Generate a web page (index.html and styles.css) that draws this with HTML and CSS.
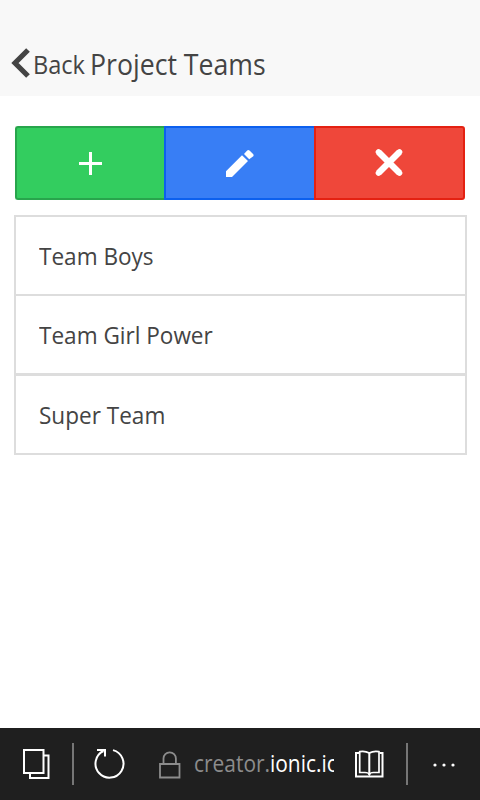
FILE: index.html
```html
<!DOCTYPE html>
<html lang="en">
<head>
<meta charset="utf-8">
<title>Project Teams</title>
<link rel="stylesheet" href="styles.css">
</head>
<body>
<header class="header">
  <svg class="chevron" width="22" height="32" viewBox="0 0 22 32"><path d="M18 3 5 16 18 29" fill="none" stroke="#444" stroke-width="5.200"/></svg>
  <span class="back">Back</span>
  <h1 class="title">Project Teams</h1>
</header>
<main class="content">
  <div class="buttons">
    <button class="button add" aria-label="Add"><svg width="32" height="32" viewBox="0 0 32 32"><path d="M5 16.500H28M16.500 5V28" stroke="#fff" stroke-width="3"/></svg></button>
    <button class="button edit" aria-label="Edit"><svg width="32" height="32" viewBox="0 0 32 32"><path d="M3 24.200V30H9L25 14 19 8.200ZM21 7 26.200 12.200 30.300 9.200Q31 8.200 30.300 7.300L26.500 3.500Q25.300 2.500 24.200 3.500Z" fill="#fff"/></svg></button>
    <button class="button remove" aria-label="Remove"><svg width="32" height="32" viewBox="0 0 32 32"><path d="M4.500 5 25.500 26M25.500 5 4.500 26" stroke="#fff" stroke-width="6.200"/><path d="M4.500 5 25.500 26M25.500 5 4.500 26" stroke="#fff" stroke-width="5.600" stroke-linecap="round"/></svg></button>
  </div>
  <ul class="list">
    <li class="item"><span>Team Boys</span></li>
    <li class="item thick"><span>Team Girl Power</span></li>
    <li class="item"><span>Super Team</span></li>
  </ul>
</main>
<footer class="bar">
  <svg class="tabs" width="30" height="32" viewBox="0 0 30 32" fill="none" stroke="#fff" stroke-width="2"><path d="M4 2H23.500V25H4ZM23 7.500H28.500V30H10V25"/></svg>
  <i class="divider"></i>
  <svg class="reload" width="32" height="32" viewBox="0 0 32 32" fill="none" stroke="#fff" stroke-width="2"><path d="M20 3.100A14 14 0 1 1 10.500 4M4 3H12V9.500"/></svg>
  <svg class="lock" width="22" height="28" viewBox="0 0 22 28" fill="none" stroke="#8c8c8c" stroke-width="1.800"><path d="M1 13H20.500V26.500H1ZM4.500 13V7.500a6.200 6.200 0 0 1 12.400 0V13"/></svg>
  <div class="url"><div class="address"><span>creator.</span>ionic.io</div></div>
  <svg class="book" width="29" height="28" viewBox="0 0 29 28" fill="none" stroke="#fff"><path stroke-width="2" d="M4 3H1V26.500H27.500V3H24.500M14.300 3V25"/><path stroke-width="1.700" d="M14.300 3Q10 .600 4.700 1.600V22.500H10Q13.500 22.500 14.300 24.500Q15 22.500 18.500 22.500H24V1.600Q18.500 .600 14.300 3"/></svg>
  <i class="divider second"></i>
  <svg class="more" width="24" height="4" viewBox="0 0 24 4" fill="#fff"><circle cx="2" cy="2" r="1.600"/><circle cx="11" cy="2" r="1.600"/><circle cx="20" cy="2" r="1.600"/></svg>
</footer>
</body>
</html>
```
FILE: styles.css
```css
* { box-sizing: border-box; }
body {
  margin: 0;
  height: 800px;
  display: flex;
  flex-direction: column;
  overflow: hidden;
  background: #fff;
  color: #444;
  font-family: "Open Sans", "Noto Sans", sans-serif;
}
svg { display: block; flex: none; }
.header {
  height: 96px;
  padding: 32px 0 0 10px;
  display: flex;
  align-items: center;
  background: #f8f8f8;
  white-space: nowrap;
}
.chevron { margin-top: -2px; }
.back { width: 58px; padding-left: 1px; font-size: 25.5px; transform: scaleX(0.925); transform-origin: left; }
.title { margin: 0; font-size: 28.5px; font-weight: 400; transform: scaleX(0.935); transform-origin: left; }
.content { flex: 1; padding: 30px 13px 0 14px; }
.buttons { display: grid; grid-template-columns: 149px 150px 151px; height: 74px; margin-left: 1px; }
.button {
  display: flex;
  align-items: center;
  justify-content: center;
  padding: 0 2px 0 0;
  border: 2px solid;
}
.add { background: #33cd5f; border-color: #28a54c; border-right: 0; border-radius: 3px 0 0 3px; }
.edit { background: #387ef5; border-color: #0c60ee; border-right: 0; }
.remove { background: #ef473a; border-color: #e42112; border-radius: 0 3px 3px 0; padding: 0; }
.list { margin: 15px 0 0; padding: 0; list-style: none; border: 2px solid #ddd; border-bottom: 0; }
.item {
  height: 79px;
  padding: 0 0 1px 23px;
  display: flex;
  align-items: center;
  border-bottom: 2px solid #ddd;
  font-size: 24px;
}
.item.thick { height: 80px; border-bottom-width: 3px; }
.item span { transform: scaleX(0.94); transform-origin: left; }
.bar { height: 72px; display: flex; align-items: center; background: #1f1f1f; }
.tabs { margin: 0 0 0 20px; }
.divider { width: 2px; height: 42px; margin-left: 22px; background: #767676; }
.reload { margin: -2px 0 0 19px; }
.lock { margin: 1px 0 0 34px; }
.url { width: 140px; margin: -2px 0 0 13px; overflow: hidden; white-space: nowrap; color: #fff; font-size: 23.5px; }
.address { transform: scaleX(0.89); transform-origin: left; }
.address span { color: #8c8c8c; }
.book { margin: -1px 0 0 21px; }
.divider.second { margin-left: 22px; }
.more { margin: 1px 0 0 25px; }
```
